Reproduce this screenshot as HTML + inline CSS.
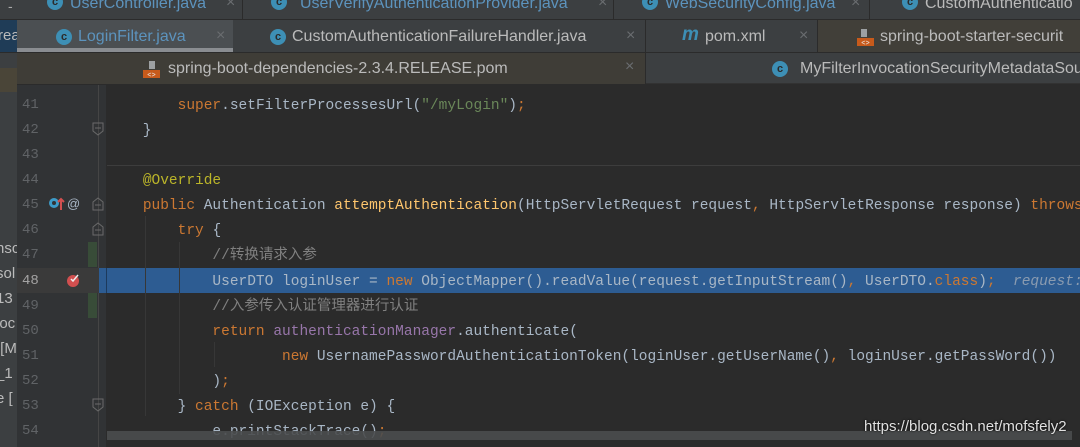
<!DOCTYPE html>
<html><head><meta charset="utf-8"><style>
*{margin:0;padding:0;box-sizing:border-box}
body{width:1080px;height:447px;overflow:hidden;background:#2b2b2b;position:relative;font-family:"Liberation Sans","Noto Sans CJK SC",sans-serif}
.a{position:absolute;white-space:pre}
.tab{position:absolute;font-size:16px;color:#bbbbbb;line-height:20px}
.ic{position:absolute;width:16px;height:16px;border-radius:50%;background:#3d8fb5;color:#2b2b2b;font-size:11px;font-weight:bold;text-align:center;line-height:16px}
.x{position:absolute;color:#6a6d70;font-size:16px}
.sep{position:absolute;width:1px;background:#2b2b2b}
.code{position:absolute;left:108px;font-family:"Liberation Mono","Noto Sans CJK SC",monospace;font-size:14.5px;color:#a9b7c6;white-space:pre;line-height:20px}
.ln{position:absolute;left:22px;width:22px;font-family:"Liberation Mono",monospace;font-size:14px;color:#606366;line-height:20px}
.k{color:#cc7832}.s{color:#6a8759}.c{color:#808080}.f{color:#ffc66d}.an{color:#bbb529}.p{color:#9876aa}
.pom{position:absolute;width:17px;height:17px}
</style></head><body>
<div class="a" style="left:0;top:0;width:1080px;height:19px;background:#3c3f41"></div>
<div class="a" style="left:0;top:19px;width:1080px;height:33px;background:#3c3f41;border-top:1px solid #2b2b2b"></div>
<div class="a" style="left:0;top:52px;width:1080px;height:32px;background:#3c3f41;border-top:1px solid #2b2b2b;border-bottom:1px solid #323232"></div>
<!-- row1 -->
<div class="a" style="left:8px;top:-2px;color:#aaa;font-size:14px">-</div>
<div class="ic" style="left:47px;top:-6px">c</div><div class="tab" style="left:70px;top:-6px;color:#5c93bd">UserController.java</div><div class="x" style="left:226px;top:-6px">×</div>
<div class="sep" style="left:242px;top:0;height:19px"></div>
<div class="ic" style="left:271px;top:-6px">c</div><div class="tab" style="left:300px;top:-6px;color:#5c93bd">UserVerifyAuthenticationProvider.java</div><div class="x" style="left:598px;top:-6px">×</div>
<div class="sep" style="left:613px;top:0;height:19px"></div>
<div class="ic" style="left:642px;top:-6px">c</div><div class="tab" style="left:665px;top:-6px;color:#5c93bd">WebSecurityConfig.java</div><div class="x" style="left:851px;top:-6px">×</div>
<div class="sep" style="left:869px;top:0;height:19px"></div>
<div class="ic" style="left:902px;top:-6px">c</div><div class="tab" style="left:925px;top:-6px">CustomAuthenticatio</div>
<!-- row2 -->
<div class="a" style="left:0;top:20px;width:17px;height:32px;background:#1f3c57"></div>
<div class="a" style="left:-2px;top:27px;font-size:15px;color:#bbb">rea</div>
<div class="a" style="left:17px;top:20px;width:216px;height:32px;background:#4b4f52"></div>
<div class="a" style="left:17px;top:48px;width:216px;height:4px;background:#8a8d91"></div>
<div class="ic" style="left:56px;top:29px">c</div><div class="tab" style="left:78px;top:27px;color:#5c93bd">LoginFilter.java</div><div class="x" style="left:216px;top:27px">×</div>
<div class="ic" style="left:270px;top:29px">c</div><div class="tab" style="left:292px;top:27px">CustomAuthenticationFailureHandler.java</div><div class="x" style="left:626px;top:27px">×</div>
<div class="sep" style="left:645px;top:20px;height:32px"></div>
<div class="a" style="left:682px;top:24px;color:#3d8fb5;font-size:19px;font-weight:bold;font-style:italic">m</div><div class="tab" style="left:705px;top:27px">pom.xml</div><div class="x" style="left:799px;top:27px">×</div>
<div class="sep" style="left:817px;top:20px;height:32px"></div>
<div class="a" style="left:818px;top:20px;width:262px;height:32px;background:#413f39"></div>
<svg class="pom" style="left:857px;top:29px" viewBox="0 0 17 17"><path d="M4 0h6v8H4z" fill="#9da0a2"/><rect x="0" y="9" width="17" height="8" fill="#c75a1b"/><text x="8.5" y="16" font-size="7" fill="#eee" text-anchor="middle" font-family="Liberation Mono">&lt;&gt;</text></svg>
<div class="tab" style="left:880px;top:27px">spring-boot-starter-securit</div>
<!-- row3 -->
<div class="a" style="left:0;top:68px;width:17px;height:24px;background:#4a4538"></div>
<div class="a" style="left:17px;top:53px;width:628px;height:31px;background:#3f3d37"></div>
<svg class="pom" style="left:143px;top:61px" viewBox="0 0 17 17"><path d="M6 0h6v8H6z" fill="#9da0a2"/><rect x="0" y="9" width="17" height="8" fill="#c75a1b"/><text x="8.5" y="16" font-size="7" fill="#eee" text-anchor="middle" font-family="Liberation Mono">&lt;&gt;</text></svg>
<div class="tab" style="left:168px;top:59px">spring-boot-dependencies-2.3.4.RELEASE.pom</div><div class="x" style="left:625px;top:58px">×</div>
<div class="sep" style="left:645px;top:53px;height:31px"></div>
<div class="ic" style="left:772px;top:61px">c</div><div class="tab" style="left:800px;top:59px">MyFilterInvocationSecurityMetadataSou</div>
<!-- left panel -->
<div class="a" style="left:0;top:92px;width:17px;height:355px;background:#3c3f41"></div>
<div class="a" style="left:-4px;top:236px;font-size:15px;color:#bbb;line-height:25px">nsc
sol
13
loc
 [M
_1
e [</div>
<!-- gutter -->
<div class="a" style="left:17px;top:85px;width:89px;height:362px;background:#313335"></div>
<div class="a" style="left:98px;top:85px;width:1px;height:362px;background:#454545"></div>
<div class="a" style="left:88px;top:242px;width:9px;height:25px;background:#384c38"></div>
<div class="a" style="left:88px;top:293px;width:9px;height:25px;background:#384c38"></div>
<div class="a" style="left:17px;top:268px;width:89px;height:25px;background:#3a3a3a"></div>
<div class="a" style="left:99px;top:268px;width:981px;height:25px;background:#2d5c92"></div>
<div class="a" style="left:106px;top:268px;width:1px;height:25px;background:#1d3a5c"></div>
<div class="a" style="left:107px;top:165px;width:973px;height:1px;background:#3d3d3d"></div>
<div class="a" style="left:145px;top:216px;width:1px;height:200px;background:#373737"></div>
<div class="a" style="left:179px;top:242px;width:1px;height:152px;background:#373737"></div>
<div class="a" style="left:214px;top:342px;width:1px;height:25px;background:#373737"></div>
<!-- line numbers -->
<div class="ln" style="top:95px">41</div><div class="ln" style="top:120px">42</div><div class="ln" style="top:145px">43</div><div class="ln" style="top:170px">44</div><div class="ln" style="top:195px">45</div><div class="ln" style="top:220px">46</div><div class="ln" style="top:245px">47</div><div class="ln" style="top:271px;color:#a4a3a3">48</div><div class="ln" style="top:296px">49</div><div class="ln" style="top:321px">50</div><div class="ln" style="top:346px">51</div><div class="ln" style="top:371px">52</div><div class="ln" style="top:396px">53</div><div class="ln" style="top:421px">54</div>
<svg class="a" style="left:48px;top:196px" width="34" height="16"><circle cx="6" cy="7" r="5" fill="#3d9bc8"/><circle cx="6" cy="7" r="2" fill="#313335"/><path d="M13 14V3M10 6l3-3 3 3" stroke="#d35050" stroke-width="2" fill="none"/><text x="19" y="12" font-size="13" fill="#a9b7c6" font-family="Liberation Sans">@</text></svg>
<svg class="a" style="left:66px;top:272px" width="16" height="16"><circle cx="7" cy="9" r="6" fill="#d14f4f"/><path d="M5 7l2 2 5-6" stroke="#eee" stroke-width="1.5" fill="none"/></svg>
<svg class="a" style="left:92px;top:122px" width="12" height="14"><path d="M1 1h10v8l-5 4-5-4z" stroke="#6a6a6a" fill="none"/><path d="M3 6h6" stroke="#6a6a6a"/></svg>
<svg class="a" style="left:92px;top:197px" width="12" height="14"><path d="M1 13h10V5L6 1 1 5z" stroke="#6a6a6a" fill="none"/><path d="M3 8h6" stroke="#6a6a6a"/></svg>
<svg class="a" style="left:92px;top:222px" width="12" height="14"><path d="M1 13h10V5L6 1 1 5z" stroke="#6a6a6a" fill="none"/><path d="M3 8h6" stroke="#6a6a6a"/></svg>
<svg class="a" style="left:92px;top:398px" width="12" height="14"><path d="M1 1h10v8l-5 4-5-4z" stroke="#6a6a6a" fill="none"/><path d="M3 6h6" stroke="#6a6a6a"/></svg>
<!-- code -->
<div class="code" style="top:96px">        <span class="k">super</span>.setFilterProcessesUrl(<span class="s">"/myLogin"</span>)<span class="k">;</span></div>
<div class="code" style="top:121px">    }</div>
<div class="code" style="top:171px">    <span class="an">@Override</span></div>
<div class="code" style="top:196px">    <span class="k">public </span>Authentication <span class="f">attemptAuthentication</span>(HttpServletRequest request<span class="k">, </span>HttpServletResponse response) <span class="k">throws</span></div>
<div class="code" style="top:221px">        <span class="k">try </span>{</div>
<div class="code" style="top:246px">            <span class="c">//转换请求入参</span></div>
<div class="code" style="top:272px">            UserDTO loginUser = <span class="k">new </span>ObjectMapper().readValue(request.getInputStream()<span class="k">, </span>UserDTO.<span class="k">class</span>)<span class="k">;</span>  <i style="color:#8a9bb0">request:</i></div>
<div class="code" style="top:297px">            <span class="c">//入参传入认证管理器进行认证</span></div>
<div class="code" style="top:322px">            <span class="k">return </span><span class="p">authenticationManager</span>.authenticate(</div>
<div class="code" style="top:347px">                    <span class="k">new </span>UsernamePasswordAuthenticationToken(loginUser.getUserName()<span class="k">, </span>loginUser.getPassWord())</div>
<div class="code" style="top:372px">            )<span class="k">;</span></div>
<div class="code" style="top:397px">        } <span class="k">catch </span>(IOException e) {</div>
<div class="code" style="top:422px">            e.printStackTrace()<span class="k">;</span></div>
<div class="a" style="left:107px;top:431px;width:965px;height:9px;background:#4a4c4e;opacity:.9"></div>
<div class="a" style="left:864px;top:418px;font-size:15px;color:#e0e0e0;text-shadow:0 0 2px #000">https://blog.csdn.net/mofsfely2</div>
</body></html>
